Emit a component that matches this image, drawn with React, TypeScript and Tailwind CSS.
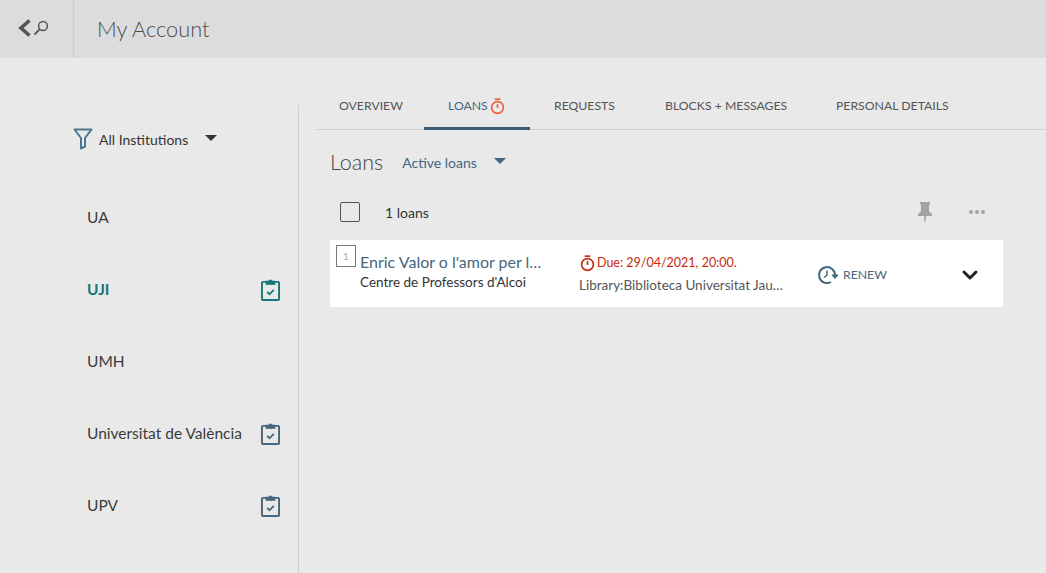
import { ChevronDown } from 'lucide-react';

const font = "font-['Lato','Noto_Sans',sans-serif]";

const tabs = [
  { label: 'OVERVIEW', width: 'w-[109px]' },
  { label: 'LOANS', width: 'w-[106px]', active: true },
  { label: 'REQUESTS', width: 'w-[111px]' },
  { label: 'BLOCKS + MESSAGES', width: 'w-[171px]' },
  { label: 'PERSONAL DETAILS', width: 'w-[170px]' },
];

const institutions = [
  { name: 'UA' },
  { name: 'UJI', active: true, clip: true },
  { name: 'UMH' },
  { name: 'Universitat de València', clip: true },
  { name: 'UPV', clip: true },
];

const Timer = ({ className }: { className: string }) => (
  <svg viewBox="0 0 16 18" fill="none" stroke="currentColor" className={className}>
    <path d="M5 1.2h6" strokeWidth="1.8" />
    <circle cx="8" cy="10" r="6.3" strokeWidth="1.8" />
    <path d="M8 6.5v4" strokeWidth="1.8" />
  </svg>
);

const Clipboard = ({ active }: { active?: boolean }) => (
  <svg
    viewBox="0 0 20 25"
    fill="none"
    stroke="currentColor"
    className={`mr-px mb-[3px] h-[24px] w-[19px] ${active ? 'text-[#16767b]' : 'text-[#44677f]'}`}
  >
    <path d="M6 5H2a1 1 0 0 0-1 1v17a1 1 0 0 0 1 1h16a1 1 0 0 0 1-1V6a1 1 0 0 0-1-1h-4" strokeWidth="2" />
    <path d="M5.5 7.5V4.5h2.7a1.9 1.9 0 0 1 3.6 0h2.7v3z" fill="currentColor" strokeWidth="1.2" />
    <path d="M6.5 15.5l2.5 2.5 4.5-4.5" strokeWidth="1.8" />
  </svg>
);

export default function App() {
  return (
    <div className={`flex h-[573px] w-[1046px] flex-col overflow-hidden bg-[#e9e9e9] ${font}`}>
      {/* Top bar */}
      <header className="flex h-[58px] shrink-0 items-center bg-[#dcdcdc]">
        <div className="flex h-full w-[74px] items-center border-r border-[#cbcbcb] pb-0.5 pl-[18px]">
          <svg viewBox="0 0 13 18" fill="none" stroke="#555" strokeWidth="3.6" className="h-[18px] w-[13px]">
            <path d="M11.5 1.5L3 9l8.5 7.5" />
          </svg>
          <svg viewBox="0 0 16 16" fill="none" stroke="#555" className="ml-0.5 h-4 w-4">
            <circle cx="10" cy="6" r="4.4" strokeWidth="1.5" />
            <path d="M6.8 9.2L1.5 14.5" strokeWidth="1.8" />
          </svg>
        </div>
        <h1 className="pl-[23px] text-[21.75px] font-light text-[#4c4c4c]">My Account</h1>
      </header>

      <div className="flex flex-1">
        {/* Institutions */}
        <aside className="mt-[47px] w-[299px] shrink-0 border-r border-[#cfcfcf]">
          <div className="mt-[19px] flex h-[30px] items-center pl-[73px] text-[#333]">
            <svg viewBox="0 0 20 22" fill="none" stroke="#4f7690" strokeWidth="2" className="h-[22px] w-5">
              <path d="M1.5 1.5h17L12 10v8.5l-4 2V10z" strokeLinejoin="round" />
            </svg>
            <span className="ml-1.5 text-[14px]">All Institutions</span>
            <span className="mb-0.5 ml-[17px] h-0 w-0 border-x-[6px] border-t-[6px] border-x-transparent border-t-[#333]" />
          </div>
          <ul className="mt-7 pr-[17px] pl-[87px]">
            {institutions.map((item) => (
              <li
                key={item.name}
                className={`flex h-[72px] items-center justify-between text-[15.5px] ${
                  item.active ? 'font-bold text-[#16767b]' : 'text-[#3b3b3b]'
                }`}
              >
                <span>{item.name}</span>
                {item.clip && <Clipboard active={item.active} />}
              </li>
            ))}
          </ul>
        </aside>

        <main className="flex-1 pl-4">
          {/* Tabs */}
          <nav className="mt-6 flex h-[48px] border-b border-[#d2d2d2]">
            {tabs.map((tab) => (
              <div
                key={tab.label}
                className={`flex h-[48px] items-center pl-6 text-[12.25px] ${tab.width} ${
                  tab.active ? 'border-b-[3px] border-[#3d5a73] pt-[3px] text-[#44677f]' : 'text-[#555]'
                }`}
              >
                {tab.label}
                {tab.active && <Timer className="ml-0.5 h-[17px] w-[15px] text-[#f0603c]" />}
              </div>
            ))}
          </nav>

          <div className="mr-[43px] ml-[15px]">
            <div className="mt-4 flex h-[32px] items-center">
              <h2 className="text-[21.5px] font-light text-[#444]">Loans</h2>
              <span className="mt-px ml-[19px] text-[14px] text-[#44677f]">Active loans</span>
              <span className="mb-0.5 ml-[17px] h-0 w-0 border-x-[6px] border-t-[6px] border-x-transparent border-t-[#44677f]" />
            </div>

            <div className="mt-[19px] flex h-[30px] items-center">
              <span className="ml-2.5 h-5 w-5 rounded-[2px] border border-[#555]" />
              <span className="ml-[25px] text-[14px] text-[#333]">1 loans</span>
              <svg viewBox="0 0 14 20" fill="#a3a3a3" className="mr-[37px] ml-auto h-5 w-3.5">
                <path d="M2 0h10v2l-1 1v6l3 3v2H8l-.5 6h-1L6 14H0v-2l3-3V3L2 2z" />
              </svg>
              <span className="mr-[18px] flex gap-[2px]">
                <i className="h-1 w-1 rounded-full bg-[#a3a3a3]" />
                <i className="h-1 w-1 rounded-full bg-[#a3a3a3]" />
                <i className="h-1 w-1 rounded-full bg-[#a3a3a3]" />
              </span>
            </div>

            {/* Loan row */}
            <div className="mt-[13px] flex h-[67px] bg-white pt-[5px] pl-1.5">
              <div className="flex h-[22px] w-5 shrink-0 items-center justify-center border border-[#777] text-[10px] text-[#aaa]">
                1
              </div>
              <div className="ml-1 w-[219px] shrink-0 pt-[7px]">
                <p className="w-[184px] truncate text-[16px] leading-[20px] text-[#44677f]">
                  Enric Valor o l'amor per la llengua
                </p>
                <p className="mt-px text-[13.5px] leading-[18px] text-[#333]">Centre de Professors d'Alcoi</p>
              </div>
              <div className="w-[205px] shrink-0 pt-[9px]">
                <div className="flex items-center text-[12.5px] leading-[18px] text-[#c5290e]">
                  <Timer className="mr-0.5 ml-px h-[17px] w-[15px]" />
                  Due: 29/04/2021, 20:00.
                </div>
                <p className="mt-1 truncate text-[13.5px] leading-[18px] text-[#555]">
                  Library:Biblioteca Universitat Jaume I
                </p>
              </div>
              <div className="mt-5 ml-[33px] flex h-5 items-center self-start text-[12.25px] text-[#44677f]">
                <svg viewBox="0 0 22 20" fill="none" stroke="#44677f" strokeWidth="2" className="mr-1 h-5 w-[22px]">
                  <path d="M18 10A8 8 0 1 0 14 17" />
                  <path d="M15 10h6l-3 3.5z" fill="#44677f" strokeWidth="1" />
                  <path d="M10 5.5V10l-3 2.5" strokeWidth="1.5" />
                </svg>
                RENEW
              </div>
              <ChevronDown className="mt-[18px] ml-[71px] h-6 w-6 text-[#222]" strokeWidth={3} />
            </div>
          </div>
        </main>
      </div>
    </div>
  );
}
